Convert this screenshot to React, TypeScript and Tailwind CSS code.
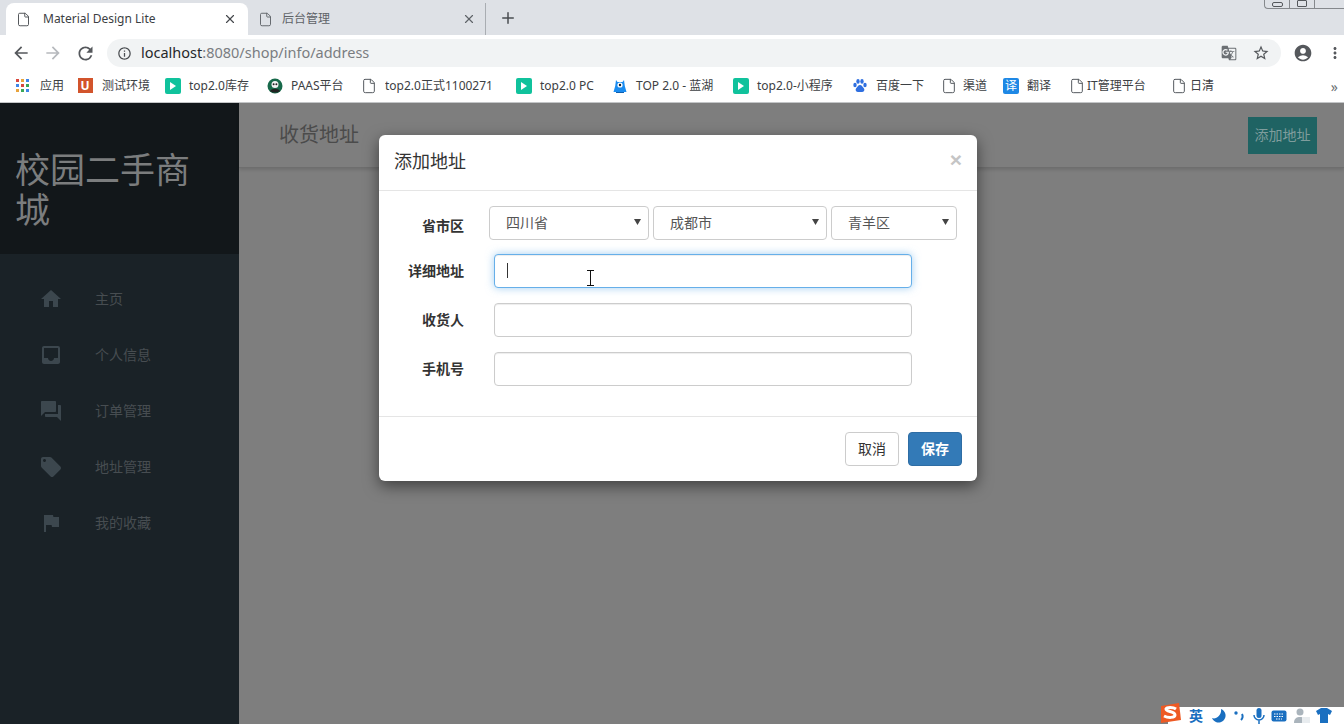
import { File, Plus, X } from "lucide-react";
import {
  MdAccountCircle,
  MdArrowBack,
  MdArrowForward,
  MdFlag,
  MdForum,
  MdGTranslate,
  MdHome,
  MdInbox,
  MdInfoOutline,
  MdLocalOffer,
  MdMoreVert,
  MdRefresh,
  MdStarBorder,
} from "react-icons/md";

const uiFont = "font-['Noto_Sans','Noto_Sans_CJK_SC',sans-serif]";
const pageFont = "font-['Liberation_Sans','Noto_Sans_CJK_SC',sans-serif]";

function PlayIcon() {
  return (
    <span className="flex h-4 w-4 items-center justify-center rounded-[2px] bg-[#10c29c]">
      <svg width="6" height="8" viewBox="0 0 6 8">
        <path d="M0 0l6 4-6 4z" fill="#fff" />
      </svg>
    </span>
  );
}

function FileIcon() {
  return <File size={16} strokeWidth={1.5} className="text-[#555a5f]" />;
}

function AppsIcon() {
  const colors = ["#d9473d", "#e8a33d", "#3f86e8", "#3f86e8", "#d9473d", "#3aa757", "#e8a33d", "#3aa757", "#3f86e8"];
  return (
    <span className="grid h-[13px] w-[13px] grid-cols-3 gap-[2px]">
      {colors.map((c, i) => (
        <span key={i} className="h-[3px] w-[3px]" style={{ backgroundColor: c }} />
      ))}
    </span>
  );
}

function UIcon() {
  return (
    <span className="flex h-[15px] w-[15px] items-center justify-center bg-[#d2542c] text-[12px] leading-none font-bold text-white">U</span>
  );
}

function PandaIcon() {
  return (
    <svg width="16" height="16" viewBox="0 0 16 16">
      <circle cx="8" cy="8" r="7.5" fill="#17694a" />
      <circle cx="8" cy="6.5" r="3.5" fill="#f2f2f2" />
      <circle cx="6.6" cy="6.2" r="1" fill="#222" />
      <circle cx="9.4" cy="6.2" r="1" fill="#222" />
      <path d="M3 13c2-3 8-3 10 0-3 2-7 2-10 0z" fill="#222" />
    </svg>
  );
}

function MonsterIcon() {
  return (
    <svg width="16" height="16" viewBox="0 0 16 16">
      <path d="M4 2l1.5 2h5L12 2l.8 6 1.7 6h-13L3.2 8z" fill="#1a8cf0" />
      <circle cx="8" cy="7" r="2.6" fill="#fff" />
      <circle cx="8" cy="7" r="1.2" fill="#123" />
      <path d="M4 14h8v1H4z" fill="#0f5fae" />
    </svg>
  );
}

function PawIcon() {
  return (
    <svg width="16" height="16" viewBox="0 0 16 16" fill="#2f6fe0">
      <ellipse cx="3" cy="7" rx="1.7" ry="2.2" />
      <ellipse cx="6" cy="3.4" rx="1.7" ry="2.3" />
      <ellipse cx="10" cy="3.4" rx="1.7" ry="2.3" />
      <ellipse cx="13" cy="7" rx="1.7" ry="2.2" />
      <path d="M8 7c2 0 2.5 2 4 3.500 1 1.500 0 3.500-2 3.500H6c-2 0-3-2-2-3.500C5.500 9 6 7 8 7z" />
    </svg>
  );
}

function YiIcon() {
  return (
    <span className="flex h-4 w-4 items-center justify-center rounded-[2px] bg-[#1e88e5] text-[12px] leading-none text-white">译</span>
  );
}

const bookmarks = [
  { icon: <AppsIcon />, label: "应用", box: "w-[63px]", gap: "gap-[10px]" },
  { icon: <UIcon />, label: "测试环境", box: "w-[88px]", gap: "gap-[9px]" },
  { icon: <PlayIcon />, label: "top2.0库存", box: "w-[102px]", gap: "gap-2" },
  { icon: <PandaIcon />, label: "PAAS平台", box: "w-[94px]", gap: "gap-2" },
  { icon: <FileIcon />, label: "top2.0正式1100271", box: "w-[155px]", gap: "gap-2", fade: true },
  { icon: <PlayIcon />, label: "top2.0 PC", box: "w-[96px]", gap: "gap-2" },
  { icon: <MonsterIcon />, label: "TOP 2.0 - 蓝湖", box: "w-[121px]", gap: "gap-2" },
  { icon: <PlayIcon />, label: "top2.0-小程序", box: "w-[119px]", gap: "gap-2" },
  { icon: <PawIcon />, label: "百度一下", box: "w-[89px]", gap: "gap-2" },
  { icon: <FileIcon />, label: "渠道", box: "w-[62px]", gap: "gap-[6px]" },
  { icon: <YiIcon />, label: "翻译", box: "w-[66px]", gap: "gap-2" },
  { icon: <FileIcon />, label: "IT管理平台", box: "w-[102px]", gap: "gap-[2px]" },
  { icon: <FileIcon />, label: "日清", box: "w-[60px]", gap: "gap-[3px]" },
];

const navItems = [
  { icon: MdHome, label: "主页" },
  { icon: MdInbox, label: "个人信息" },
  { icon: MdForum, label: "订单管理" },
  { icon: MdLocalOffer, label: "地址管理" },
  { icon: MdFlag, label: "我的收藏" },
];

function TabBar() {
  return (
    <div className="relative flex h-[35px] shrink-0 items-end bg-[#dee1e6] pl-[6px]">
      <div className="flex h-[32px] w-[242px] items-center rounded-t-[8px] bg-white pr-[11px] pl-[10px]">
        <File size={15} strokeWidth={1.5} className="text-[#4a4d51]" />
        <span className="ml-[12px] flex-1 text-[12px] text-[#3c4043]">Material Design Lite</span>
        <X size={14} strokeWidth={2} className="text-[#45484c]" />
      </div>
      <div className="flex h-[32px] w-[238px] items-center border-r border-[#a9adb2] pr-[9px] pl-[10px]">
        <File size={15} strokeWidth={1.5} className="text-[#5f6368]" />
        <span className="ml-[9px] flex-1 text-[12px] text-[#5f6368]">后台管理</span>
        <X size={14} strokeWidth={2} className="text-[#5f6368]" />
      </div>
      <Plus size={18} strokeWidth={2} className="mb-[8px] ml-[13px] text-[#4a4d51]" />
      {/* window buttons, cut off by the top of the picture */}
      <div className="absolute top-0 right-0 flex h-[9px] w-[80px] rounded-bl-[4px] border-b border-l border-[#85888c]">
        <div className="flex w-[25px] justify-center border-r border-[#85888c]">
          <span className="mt-[2px] h-[5px] w-[11px] rounded-[2px] border border-[#55585c]" />
        </div>
        <div className="flex w-[25px] justify-center border-r border-[#85888c]">
          <span className="h-[7px] w-[10px] rounded-[1px] border border-[#55585c]" />
        </div>
      </div>
    </div>
  );
}

function Toolbar() {
  return (
    <div className="flex h-[35px] shrink-0 items-center bg-white pt-[1px] text-[#5f6368]">
      <MdArrowBack size={20} className="ml-[11px] text-[#55585c]" />
      <MdArrowForward size={20} className="ml-[12px] text-[#b6b9bd]" />
      <MdRefresh size={21} className="ml-[12px] text-[#55585c]" />
      <div className="ml-[11px] flex h-[28px] w-[1174px] items-center rounded-full bg-[#f1f3f4] pr-[10px] pl-[10px]">
        <MdInfoOutline size={15} className="text-[#4a4d51]" />
        <span className="ml-[9px] flex-1 text-[14.5px] text-[#7a7d81]">
          <span className="text-[#26282b]">localhost</span>:8080/shop/info/address
        </span>
        <MdGTranslate size={16} className="mr-[15px] text-[#6b6f73]" />
        <MdStarBorder size={18} className="mr-[1px] text-[#55585c]" />
      </div>
      <MdAccountCircle size={20} className="ml-[12px] text-[#55585c]" />
      <MdMoreVert size={18} className="ml-[13px] text-[#55585c]" />
    </div>
  );
}

function BookmarkBar() {
  return (
    <div className="relative flex h-[33px] shrink-0 items-center border-b border-[#c4c6c8] bg-white pb-[1px] pl-[14px] text-[12px] text-[#3c4043]">
      {bookmarks.map((b) => (
        <div key={b.label} className={`flex shrink-0 items-center overflow-hidden ${b.box} ${b.gap}`}>
          <span className="flex w-4 shrink-0 justify-center">{b.icon}</span>
          <span className={b.fade ? "w-[112px] overflow-hidden whitespace-nowrap text-clip" : "whitespace-nowrap"}>{b.label}</span>
        </div>
      ))}
      <span className="absolute top-[6px] right-[6px] text-[14px] text-[#6b6f73]">»</span>
    </div>
  );
}

function Sidebar() {
  return (
    <aside className="flex w-[239px] shrink-0 flex-col bg-[#1a2227]">
      <div className="flex h-[151px] items-start bg-[#12171a] pt-[48px] pl-[15px]">
        <h1 className="w-[200px] text-[35px] leading-[40px] text-[#7b7d7e]">校园二手商城</h1>
      </div>
      <nav className="flex flex-col pt-[17px]">
        {navItems.map((item) => (
          <div key={item.label} className="flex h-[56px] items-center pl-[39px]">
            <item.icon size={24} className="text-[#3c474e]" />
            <span className="ml-[32px] text-[14px] text-[#474d51]">{item.label}</span>
          </div>
        ))}
      </nav>
    </aside>
  );
}

function SelectBox({ value, box }: { value: string; box: string }) {
  return (
    <div className={`flex h-[34px] items-center justify-between rounded-[4px] border border-[#ccc] bg-white pr-[7px] pl-[16px] text-[14px] text-[#555] ${box}`}>
      <span>{value}</span>
      <svg width="7" height="6" viewBox="0 0 7 6" className="mb-[3px]">
        <path d="M0 0h7L3.500 6z" fill="#444" />
      </svg>
    </div>
  );
}

function FormRow({ label, focused }: { label: string; focused?: boolean }) {
  return (
    <div className="flex items-center">
      <label className="w-[85px] text-right text-[14px] font-bold text-[#333]">{label}</label>
      <div className="relative ml-[30px] w-[418px]">
        <input
          className={
            focused
              ? "block h-[34px] w-full rounded-[4px] border border-[#66afe9] bg-white shadow-[inset_0_1px_1px_rgba(0,0,0,0.075),0_0_8px_rgba(102,175,233,0.6)] outline-none"
              : "block h-[34px] w-full rounded-[4px] border border-[#ccc] bg-white shadow-[inset_0_1px_1px_rgba(0,0,0,0.075)] outline-none"
          }
        />
        {focused && <span className="absolute top-[9px] left-[13px] h-[15px] w-px bg-[#333]" />}
      </div>
    </div>
  );
}

function AddressModal() {
  return (
    <div className={`absolute top-[32px] left-[379px] w-[598px] rounded-[6px] bg-white shadow-[0_5px_15px_rgba(0,0,0,0.5)] ${pageFont}`}>
      <div className="flex h-[56px] items-start justify-between border-b border-[#e5e5e5] pt-[14px] pr-[15px] pl-[15px]">
        <h4 className="text-[18px] leading-[26px] text-[#333]">添加地址</h4>
        <span className="text-[21px] leading-[21px] font-bold text-[#c5c5c5]">×</span>
      </div>
      <div className="flex flex-col pt-[15px] pb-[30px]">
        <div className="flex items-start">
          <label className="mt-[10px] w-[85px] text-right text-[14px] font-bold text-[#333]">省市区</label>
          <div className="ml-[25px] flex gap-[4px]">
            <SelectBox value="四川省" box="w-[160px]" />
            <SelectBox value="成都市" box="w-[174px]" />
            <SelectBox value="青羊区" box="w-[126px]" />
          </div>
        </div>
        <div className="mt-[14px] flex flex-col gap-[15px]">
          <FormRow label="详细地址" focused />
          <FormRow label="收货人" />
          <FormRow label="手机号" />
        </div>
      </div>
      <div className="flex justify-end gap-[9px] border-t border-[#e5e5e5] p-[15px]">
        <button className="h-[34px] w-[54px] rounded-[4px] border border-[#ccc] bg-white text-[14px] text-[#333]">取消</button>
        <button className="h-[34px] w-[54px] rounded-[4px] border border-[#2e6da4] bg-[#337ab7] text-[14px] font-bold text-white">保存</button>
      </div>
    </div>
  );
}

function TextCursor() {
  return (
    <svg width="9" height="16" viewBox="0 0 9 16" className="absolute top-[167px] left-[586px]" fill="none" stroke="#111" strokeWidth="1">
      <path d="M1 .5h7M1 15.500h7M4.500 .5v15" />
    </svg>
  );
}

function ImeBar() {
  return (
    <div className="absolute right-0 bottom-0 flex h-[17px] w-[176px] items-center bg-white pl-[11px] text-[#1a6fc0]">
      <svg width="24" height="22" viewBox="0 0 24 22" className="absolute -top-[5px] -left-[10px]">
        <path d="M3 4l18-3 2 17-20 3z" fill="#ee5a24" />
        <path d="M18 7c-3-2-9-2-10 0 0 3 9 2 9 6 0 3-7 3-11 1" fill="none" stroke="#fff" strokeWidth="3" />
      </svg>
      <span className="ml-[10px] text-[14px] leading-none font-bold">英</span>
      <svg width="14" height="14" viewBox="0 0 14 14" className="ml-[9px]">
        <path d="M9 0a7 7 0 1 1-9 9c4 2 10-3 9-9z" fill="#1a6fc0" />
      </svg>
      <svg width="14" height="12" viewBox="0 0 14 12" className="ml-[7px]">
        <circle cx="3" cy="3" r="1.700" fill="#1a6fc0" />
        <path d="M9 4c1 2 1 4-1 6" stroke="#1a6fc0" strokeWidth="2" fill="none" />
      </svg>
      <svg width="12" height="16" viewBox="0 0 12 16" className="ml-[6px]">
        <rect x="3.500" y="0" width="5" height="10" rx="2.500" fill="#1a6fc0" />
        <path d="M1 7a5 5 0 0 0 10 0M6 12v4" stroke="#1a6fc0" strokeWidth="1.500" fill="none" />
      </svg>
      <svg width="16" height="12" viewBox="0 0 16 12" className="ml-[6px]">
        <rect x=".5" y=".5" width="15" height="11" rx="2" fill="#1a6fc0" />
        <path d="M3 4h10M3 6.500h10M5 9h6" stroke="#fff" strokeWidth="1.200" strokeDasharray="1.500 1" />
      </svg>
      <svg width="16" height="15" viewBox="0 0 16 15" className="ml-[7px]">
        <circle cx="6" cy="4" r="3.500" fill="#aab4bc" />
        <path d="M0 15c0-5 3-6 6-6s6 1 6 6z" fill="#aab4bc" />
        <rect x="8" y="9" width="8" height="6" fill="#e8ecef" />
      </svg>
      <svg width="16" height="15" viewBox="0 0 16 15" className="ml-[6px]">
        <path d="M5 0h6l5 3-2 4-2-1v9H4V6L2 7 0 3z" fill="#1a6fc0" />
      </svg>
    </div>
  );
}

export default function App() {
  return (
    <div className={`flex h-screen w-full flex-col overflow-hidden bg-white ${uiFont}`}>
      <TabBar />
      <Toolbar />
      <BookmarkBar />
      <div className={`relative flex min-h-0 flex-1 bg-[#7e7e7e] ${pageFont}`}>
        <Sidebar />
        <main className="flex-1">
          <header className="flex h-[65px] items-center justify-between border-b border-[#6e6e6e] pr-[27px] pl-[40px] shadow-[0_2px_3px_rgba(0,0,0,0.12)]">
            <span className="text-[20px] text-[#4b4b4b]">收货地址</span>
            <span className="flex h-[37px] w-[69px] items-center justify-center bg-[#1f6363] text-[14px] text-[#7f9d9d]">添加地址</span>
          </header>
        </main>
        <AddressModal />
        <TextCursor />
        <ImeBar />
      </div>
    </div>
  );
}
